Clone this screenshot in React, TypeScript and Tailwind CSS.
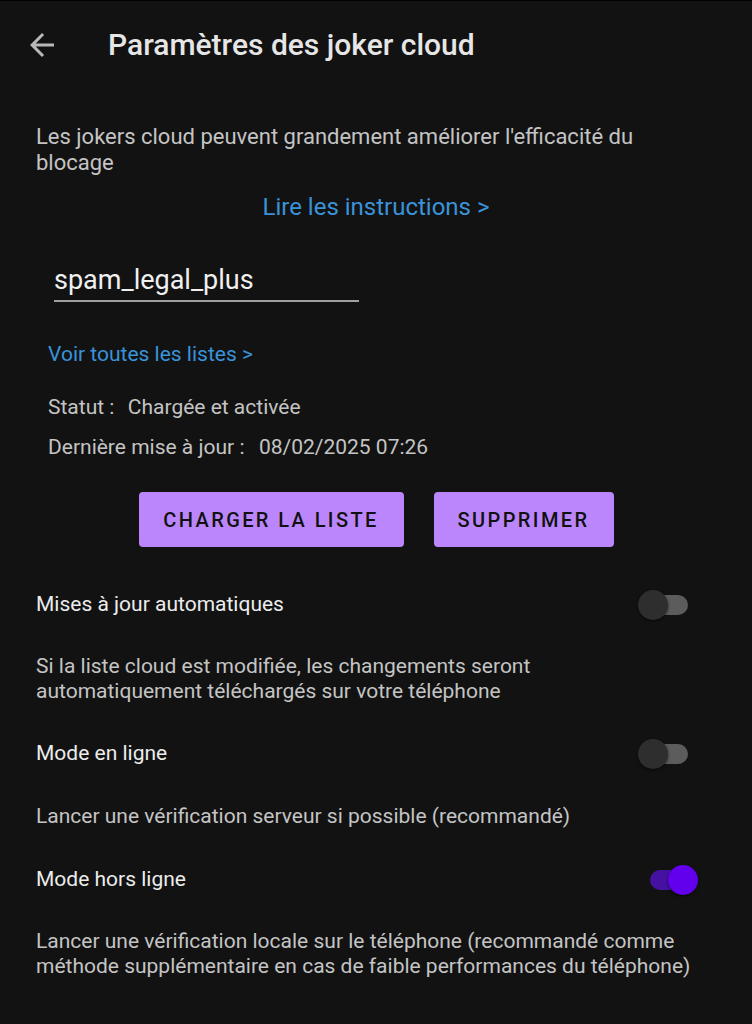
import React, { useState } from "react";

const Toggle = ({ on }: { on: boolean }) => {
  return (
    <div className="relative w-[60px] h-[30px] shrink-0">
      <div
        className={
          on
            ? "absolute left-[12px] top-[5px] w-[38px] h-[20px] rounded-full bg-[#4511a0]"
            : "absolute left-[12px] top-[5px] w-[38px] h-[20px] rounded-full bg-[#5c5c5c]"
        }
      />
      <div
        className={
          on
            ? "absolute left-[30px] top-0 size-[30px] rounded-full bg-[#6200ee] shadow-[0_1px_3px_rgba(0,0,0,0.6)]"
            : "absolute left-0 top-0 size-[30px] rounded-full bg-[#2e2e2e] shadow-[0_1px_3px_rgba(0,0,0,0.6)]"
        }
      />
    </div>
  );
};

const SettingRow = ({ label, on }: { label: string; on: boolean }) => (
  <div className="flex items-center justify-between pr-[18px] h-[30px]">
    <span className="text-[21px] text-[#ececec]">{label}</span>
    <Toggle on={on} />
  </div>
);

export default function App() {
  const [listName] = useState("spam_legal_plus");

  return (
    <div className="min-h-[1024px] w-[752px] bg-[#121212] font-['Roboto',sans-serif] border-t border-black">
      {/* toolbar */}
      <div className="flex items-center h-[87px]">
        <svg
          className="ml-[24px] size-[36px] text-[#b8b8b8]"
          viewBox="0 0 24 24"
          fill="currentColor"
        >
          <path d="M20 11H7.83l5.59-5.59L12 4l-8 8 8 8 1.41-1.41L7.83 13H20v-2z" />
        </svg>
        <h1 className="ml-[48px] text-[30px] font-medium text-[#e6e6e6]">
          Paramètres des joker cloud
        </h1>
      </div>

      <div className="px-[36px]">
        <p className="mt-[36px] text-[22px] leading-[26px] text-[#c4c4c4]">
          Les jokers cloud peuvent grandement améliorer l'efficacité du blocage
        </p>

        <div className="mt-[17px] text-center text-[24px] leading-[28px] text-[#3a93d9]">
          Lire les instructions &gt;
        </div>

        <div className="mt-[43px] ml-[18px] w-[305px] border-b-2 border-[#a0a0a0] pb-[4px]">
          <span className="text-[27px] leading-[32px] text-[#f0f0f0]">{listName}</span>
        </div>

        <div className="ml-[12px]">
          <div className="mt-[40px] text-[21px] leading-[24px] text-[#3a93d9]">
            Voir toutes les listes &gt;
          </div>
          <div className="mt-[29px] text-[21px] leading-[24px] text-[#c4c4c4]">
            Statut :&nbsp; <span className="ml-[3px]">Chargée et activée</span>
          </div>
          <div className="mt-[16px] text-[21px] leading-[24px] text-[#c4c4c4]">
            Dernière mise à jour :&nbsp; <span className="ml-[4px]">08/02/2025 07:26</span>
          </div>
        </div>

        <div className="mt-[33px] flex justify-center gap-[30px] -mx-[36px]">
          <button className="w-[265px] h-[55px] rounded-[4px] bg-[#bb86fc] text-[20px] font-medium tracking-[2.4px] text-[#111]">
            CHARGER LA LISTE
          </button>
          <button className="w-[180px] h-[55px] rounded-[4px] bg-[#bb86fc] text-[20px] font-medium tracking-[2.4px] text-[#111]">
            SUPPRIMER
          </button>
        </div>

        <div className="mt-[43px]">
          <SettingRow label="Mises à jour automatiques" on={false} />
        </div>
        <p className="mt-[34px] text-[21px] leading-[25px] text-[#c4c4c4]">
          Si la liste cloud est modifiée, les changements seront
          <br />
          automatiquement téléchargés sur votre téléphone
        </p>

        <div className="mt-[35px]">
          <SettingRow label="Mode en ligne" on={false} />
        </div>
        <p className="mt-[35px] text-[21px] leading-[25px] text-[#c4c4c4]">
          Lancer une vérification serveur si possible (recommandé)
        </p>

        <div className="mt-[36px]">
          <SettingRow label="Mode hors ligne" on={true} />
        </div>
        <p className="mt-[34px] text-[21px] leading-[25px] text-[#c4c4c4]">
          Lancer une vérification locale sur le téléphone (recommandé comme
          <br />
          méthode supplémentaire en cas de faible performances du téléphone)
        </p>
      </div>
    </div>
  );
}
